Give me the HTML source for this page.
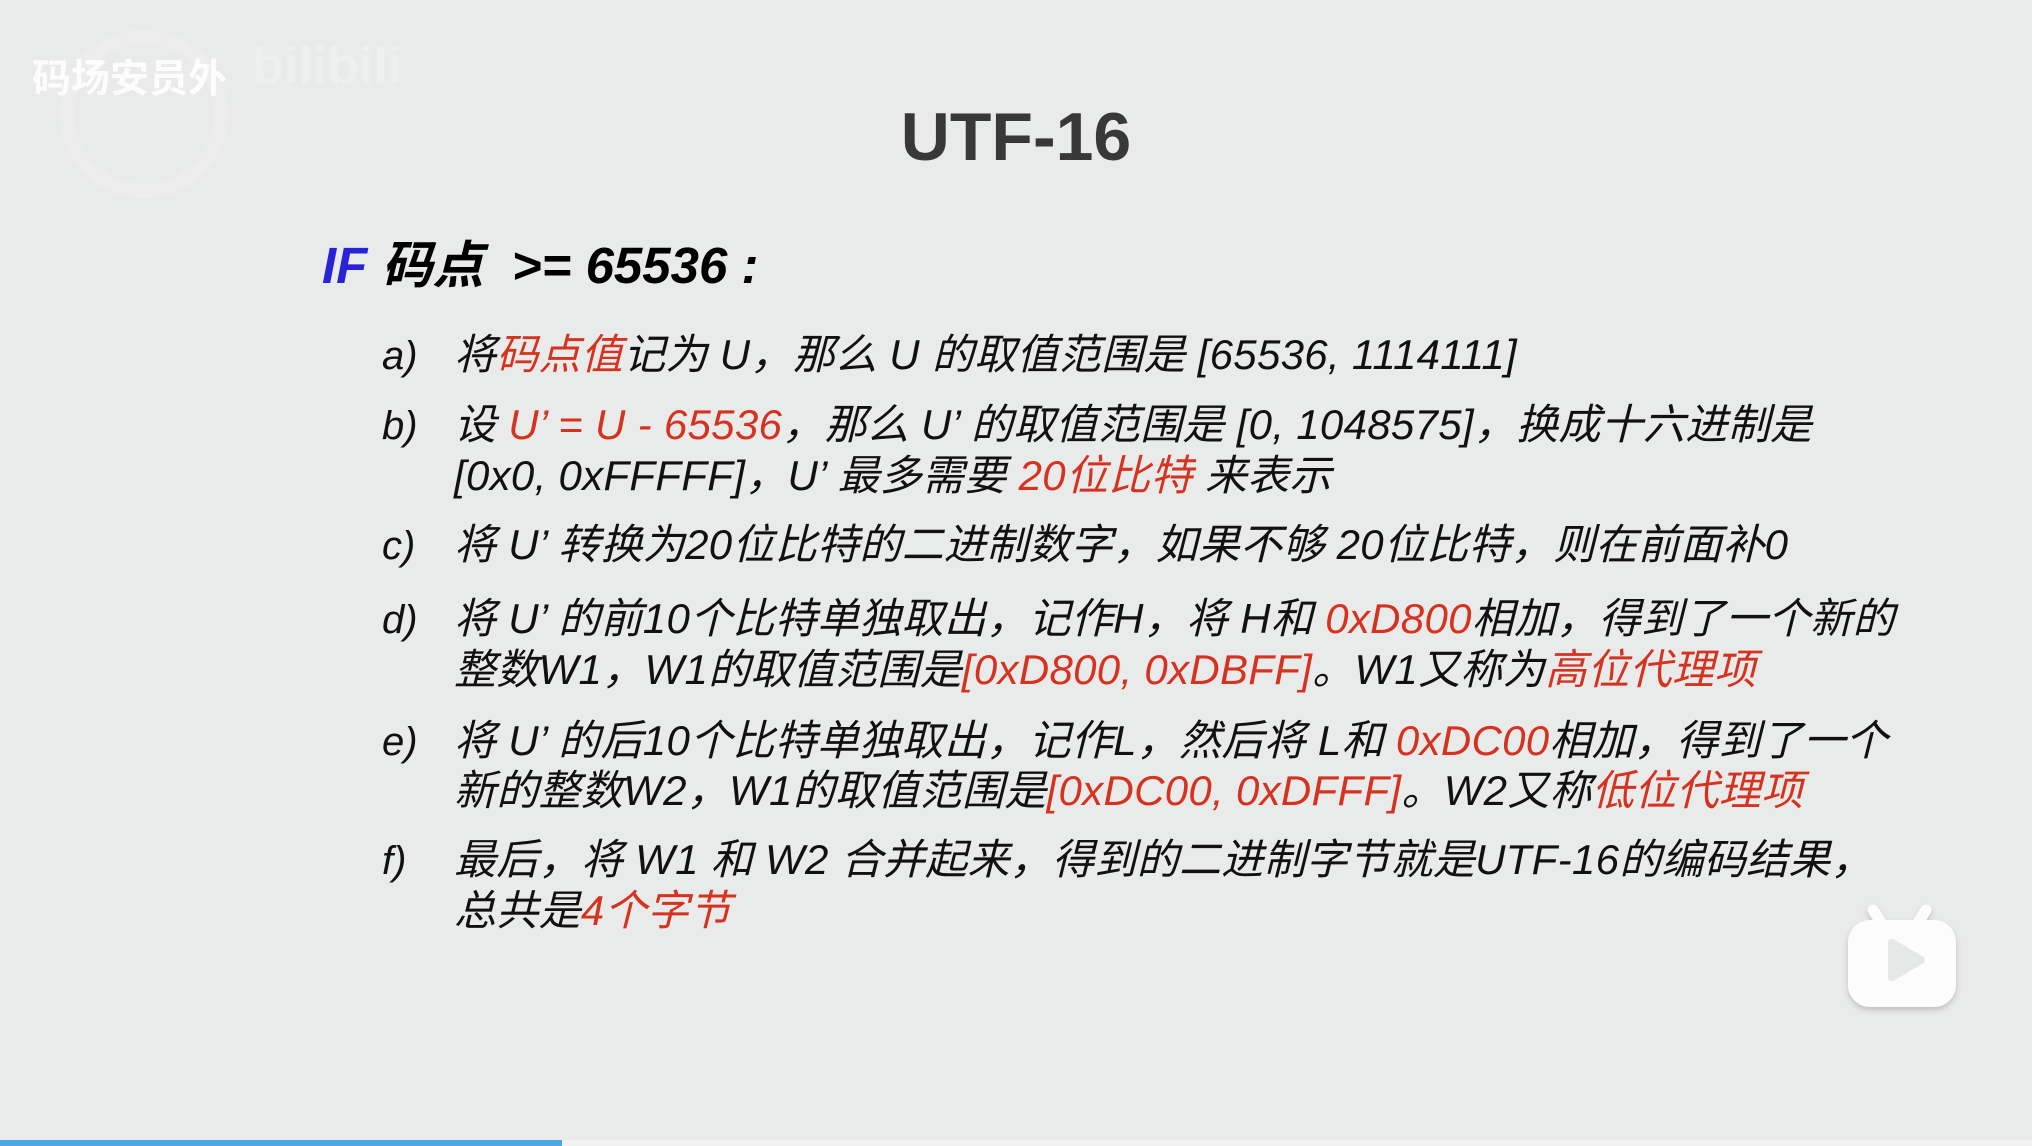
<!DOCTYPE html>
<html><head><meta charset="utf-8"><style>
html,body{margin:0;padding:0}
body{width:2032px;height:1146px;background:#e9eaea;position:relative;overflow:hidden;font-family:"Liberation Sans","Noto Sans CJK SC",sans-serif;}
.t{position:absolute;white-space:nowrap;font-style:italic;font-size:42px;line-height:44px;color:#111;letter-spacing:0.3px}
.r{color:#d5321f}
.lb{position:absolute;font-size:40px;line-height:44px;font-style:italic;color:#111;left:382px}
</style></head><body>
<div style="position:absolute;left:60px;top:30px;width:140px;height:140px;border-radius:50%;border:14px solid rgba(255,255,255,0.18);"></div>
<div style="position:absolute;left:32px;top:48px;font-size:39px;font-weight:bold;color:rgba(255,255,255,0.85);font-family:'Liberation Sans','Noto Sans CJK SC',sans-serif;">码场安员外</div>
<div style="position:absolute;left:252px;top:36px;font-size:52px;font-weight:bold;color:rgba(255,255,255,0.25);">bilibili</div>
<div style="position:absolute;left:0;width:2032px;top:97px;text-align:center;font-size:68px;font-weight:bold;color:#383838;line-height:80px;">UTF-16</div>
<div style="position:absolute;left:322px;top:236px;font-size:51px;font-weight:bold;font-style:italic;line-height:60px;white-space:nowrap;"><span style="color:#2a22d6">IF</span> 码点 &nbsp;&gt;= 65536 :</div>

<div class="lb" style="top:334px">a)</div>
<div class="t" style="left:454px;top:333px">将<span class="r">码点值</span>记为 U，那么 U 的取值范围是 [65536, 1114111]</div>

<div class="lb" style="top:404px">b)</div>
<div class="t" style="left:454px;top:403px">设 <span class="r">U’ = U - 65536</span>，那么 U’ 的取值范围是 [0, 1048575]，换成十六进制是</div>
<div class="t" style="left:454px;top:454px">[0x0, 0xFFFFF]，U’ 最多需要 <span class="r">20位比特</span> 来表示</div>

<div class="lb" style="top:524px">c)</div>
<div class="t" style="left:454px;top:523px">将 U’ 转换为20位比特的二进制数字，如果不够 20位比特，则在前面补0</div>

<div class="lb" style="top:598px">d)</div>
<div class="t" style="left:454px;top:597px">将 U’ 的前10个比特单独取出，记作H，将 H和 <span class="r">0xD800</span>相加，得到了一个新的</div>
<div class="t" style="left:454px;top:648px">整数W1，W1的取值范围是<span class="r">[0xD800, 0xDBFF]</span>。W1又称为<span class="r">高位代理项</span></div>

<div class="lb" style="top:720px">e)</div>
<div class="t" style="left:454px;top:719px">将 U’ 的后10个比特单独取出，记作L，然后将 L和 <span class="r">0xDC00</span>相加，得到了一个</div>
<div class="t" style="left:454px;top:769px">新的整数W2，W1的取值范围是<span class="r">[0xDC00, 0xDFFF]</span>。W2又称<span class="r">低位代理项</span></div>

<div class="lb" style="top:839px">f)</div>
<div class="t" style="left:454px;top:838px">最后，将 W1 和 W2 合并起来，得到的二进制字节就是UTF-16的编码结果，</div>
<div class="t" style="left:454px;top:889px">总共是<span class="r">4个字节</span></div>

<svg style="position:absolute;left:1840px;top:898px" width="124" height="118" viewBox="0 0 124 118">
<defs><filter id="s" x="-20%" y="-20%" width="140%" height="150%"><feDropShadow dx="0" dy="3" stdDeviation="3" flood-opacity="0.18"/></filter></defs>
<g filter="url(#s)" fill="#fcfcfc">
<path d="M33 12 L42 26" stroke="#fcfcfc" stroke-width="11" stroke-linecap="round"/>
<path d="M86 12 L77 26" stroke="#fcfcfc" stroke-width="11" stroke-linecap="round"/>
<rect x="8" y="22" width="108" height="87" rx="22"/>
</g>
<path d="M48 46 Q48 38 55 42 L82 58 Q88 62 82 66 L55 82 Q48 86 48 78 Z" fill="#e6e7e7"/>
</svg>
<div style="position:absolute;left:0;top:1140px;width:2032px;height:6px;background:#f1f1f1"></div>
<div style="position:absolute;left:0;top:1140px;width:562px;height:6px;background:#4aa8e2"></div>
</body></html>
